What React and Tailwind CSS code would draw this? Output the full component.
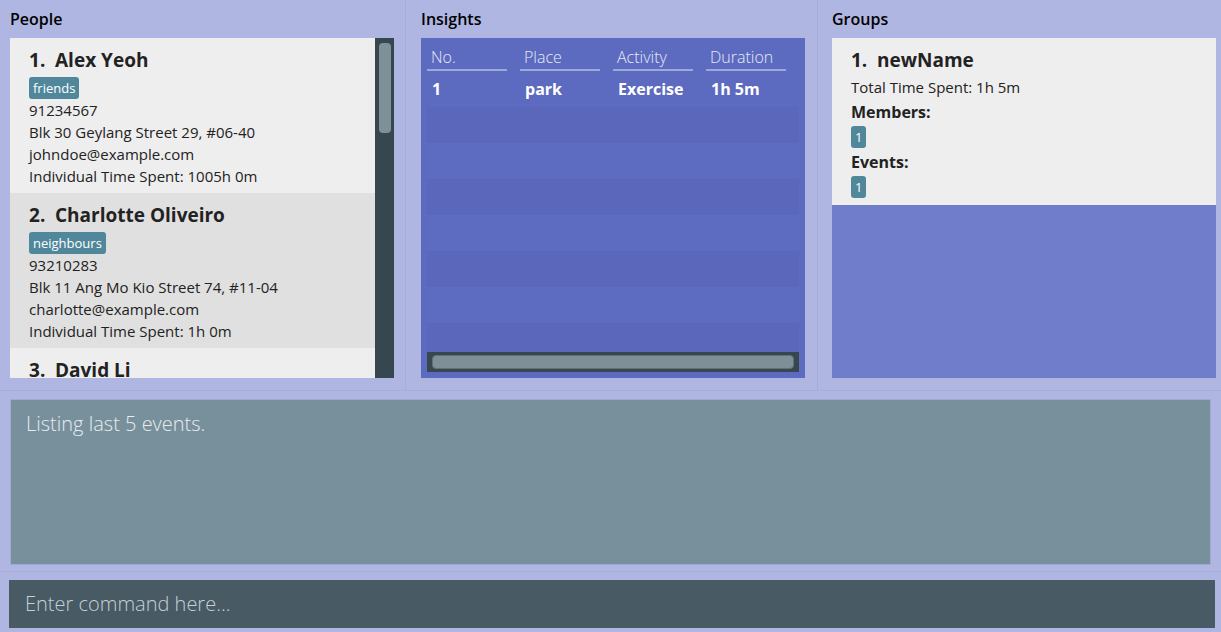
import React from 'react';

const people = [
  {
    name: 'Alex Yeoh',
    tag: 'friends',
    phone: '91234567',
    address: 'Blk 30 Geylang Street 29, #06-40',
    email: 'johndoe@example.com',
    time: '1005h 0m',
  },
  {
    name: 'Charlotte Oliveiro',
    tag: 'neighbours',
    phone: '93210283',
    address: 'Blk 11 Ang Mo Kio Street 74, #11-04',
    email: 'charlotte@example.com',
    time: '1h 0m',
  },
  {
    name: 'David Li',
    tag: 'family',
    phone: '87438807',
    address: 'Blk 436 Serangoon Gardens Street 26, #16-43',
    email: 'lidavid@example.com',
    time: '0h 0m',
  },
];

const columns = ['No.', 'Place', 'Activity', 'Duration'];
const rows = [['1', 'park', 'Exercise', '1h 5m']];

// Odd/even stripes below the first data row
const stripes = ['bg-[#5a67bb]', 'bg-[#5d6bc1]', 'bg-[#5a67bb]', 'bg-[#5d6bc1]', 'bg-[#5a67bb]', 'bg-[#5d6bc1]', 'bg-[#5a67bb]'];

function PanelTitle({ children }) {
  return (
    <div className="h-[38px] flex items-center text-[16px] font-semibold text-black">
      {children}
    </div>
  );
}

function Tag({ children }) {
  return (
    <span className="inline-block bg-[#50879b] text-white text-[13px] leading-[22px] px-[4px] rounded-[3px]">
      {children}
    </span>
  );
}

function PersonCard({ person, index }) {
  const bg = index % 2 === 0 ? 'bg-[#eeeeee]' : 'bg-[#e0e0e0]';
  return (
    <div className={`${bg} pl-[19px] pt-[9px] h-[155px] shrink-0 text-[#222222]`}>
      <div className="text-[19px] font-bold leading-[26px] flex">
        <span className="w-[26px]">{index + 1}.</span>
        <span>{person.name}</span>
      </div>
      <div className="mt-[2px]">
        <Tag>{person.tag}</Tag>
      </div>
      <div className="text-[15px] leading-[22px]">
        <div>{person.phone}</div>
        <div>{person.address}</div>
        <div>{person.email}</div>
        <div>Individual Time Spent: {person.time}</div>
      </div>
    </div>
  );
}

export default function App() {
  return (
    <div
      className="w-[1221px] h-[632px] bg-[#afb6e2] flex flex-col overflow-hidden"
      style={{ fontFamily: '"Open Sans", "Noto Sans", sans-serif' }}
    >
      {/* Top panels */}
      <div className="h-[391px] flex border-b border-[#a6addb] shrink-0">
        {/* People */}
        <div className="w-[406px] pl-[10px] border-r border-[#a6addb]">
          <PanelTitle>People</PanelTitle>
          <div className="w-[384px] h-[340px] flex overflow-hidden">
            <div className="flex-1 flex flex-col overflow-hidden">
              {people.map((p, i) => (
                <PersonCard key={p.name} person={p} index={i} />
              ))}
            </div>
            <div className="w-[19px] bg-[#37474f] pt-[5px] pl-[4px]">
              <div className="w-[12px] h-[90px] rounded-[4px] bg-[#7f9198]" />
            </div>
          </div>
        </div>

        {/* Insights */}
        <div className="w-[412px] pl-[15px] border-r border-[#a6addb]">
          <PanelTitle>Insights</PanelTitle>
          <div className="w-[384px] h-[340px] bg-[#5c6bc0] px-[6px] flex flex-col">
            <div className="flex h-[33px] items-end">
              {columns.map((c) => (
                <div key={c} className="w-[93px]">
                  <div className="w-[80px] pl-[4px] text-[16px] font-light text-[#e8eaf6] leading-[22px]">
                    {c}
                  </div>
                  <div className="w-[80px] h-[2px] bg-[#9fa8da] mt-[1px]" />
                </div>
              ))}
            </div>
            {rows.map((r, i) => (
              <div key={i} className="flex h-[36px] items-center">
                {r.map((cell, j) => (
                  <div key={j} className="w-[93px] pl-[5px] text-[16px] font-bold text-white">
                    {cell}
                  </div>
                ))}
              </div>
            ))}
            <div className="flex-1 flex flex-col overflow-hidden">
              {stripes.map((s, i) => (
                <div key={i} className={`${s} h-[36px] shrink-0`} />
              ))}
            </div>
            <div className="h-[20px] bg-[#37474f] px-[5px] py-[3px] mb-[6px]">
              <div className="h-full rounded-[4px] bg-[#7f8f98] border border-[#5f717a]" />
            </div>
          </div>
        </div>

        {/* Groups */}
        <div className="flex-1 pl-[14px]">
          <PanelTitle>Groups</PanelTitle>
          <div className="w-[384px] h-[340px] bg-[#6f7dcb] flex flex-col">
            <div className="bg-[#eeeeee] h-[167px] pl-[19px] pt-[9px] text-[#222222]">
              <div className="text-[19px] font-bold leading-[26px] flex">
                <span className="w-[26px]">1.</span>
                <span>newName</span>
              </div>
              <div className="text-[15px] leading-[24px] mt-[2px]">Total Time Spent: 1h 5m</div>
              <div className="text-[16px] font-bold leading-[26px]">Members:</div>
              <div className="h-[24px] flex items-center">
                <span className="inline-block bg-[#50879b] text-white text-[13px] leading-[22px] px-[4px] rounded-[3px]">1</span>
              </div>
              <div className="text-[16px] font-bold leading-[26px]">Events:</div>
              <div className="h-[24px] flex items-center">
                <span className="inline-block bg-[#50879b] text-white text-[13px] leading-[22px] px-[4px] rounded-[3px]">1</span>
              </div>
            </div>
          </div>
        </div>
      </div>

      {/* Result display */}
      <div className="h-[181px] px-[10px] pt-[8px] pb-[6px] border-b border-[#a6addb] shrink-0">
        <div className="h-full bg-[#78909c] border border-[#a1a9d6] px-[15px] pt-[9px] text-[20px] font-light text-[#e6ecef]">
          Listing last 5 events.
        </div>
      </div>

      {/* Command box */}
      <div className="px-[9px] pt-[8px]">
        <div className="h-[48px] w-[1206px] bg-[#485a64] flex items-center px-[16px] text-[20px] font-light text-[#c5d0d5]">
          Enter command here...
        </div>
      </div>
    </div>
  );
}
